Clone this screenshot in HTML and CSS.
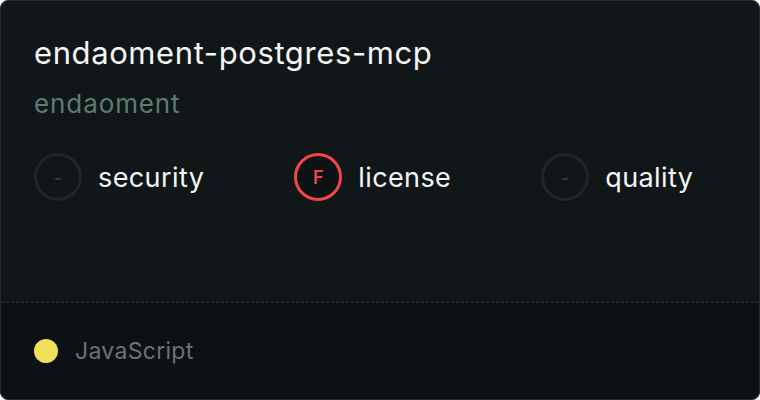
FILE: index.html
```html
<!DOCTYPE html>
<html lang="en">
<head>
    <meta charset="UTF-8">
    <meta name="viewport" content="width=device-width, initial-scale=1.0">
    <title>endaoment-postgres-mcp</title>
    <link rel="stylesheet" href="styles.css">
</head>
<body>
    <div class="card">
        <div class="card-main">
            <h1 class="repo-name">endaoment-postgres-mcp</h1>
            <p class="repo-owner">endaoment</p>

            <div class="scores">
                <div class="score">
                    <span class="grade empty">-</span>
                    <span class="score-label">security</span>
                </div>
                <div class="score">
                    <span class="grade fail">F</span>
                    <span class="score-label">license</span>
                </div>
                <div class="score">
                    <span class="grade empty">-</span>
                    <span class="score-label">quality</span>
                </div>
            </div>
        </div>

        <div class="card-footer">
            <span class="lang-dot"></span>
            <span class="lang-name">JavaScript</span>
        </div>
    </div>
</body>
</html>
```

FILE: styles.css
```css
:root {
    --card-bg: #111719;
    --footer-bg: #0d1113;
    --border-color: #23292c;
    --text-color: #f5f5f5;
    --muted-green: #5e7b72;
    --muted-gray: #6d7275;
    --ring-empty: #1f2528;
    --grade-red: #f04747;
    --js-yellow: #f1e05a;
}

* {
    margin: 0;
    padding: 0;
    box-sizing: border-box;
}

body {
    background-color: #ffffff;
    font-family: 'Inter', 'Noto Sans', sans-serif;
}

.card {
    width: 760px;
    height: 400px;
    background-color: var(--card-bg);
    border: 1px solid var(--border-color);
    border-radius: 8px;
    overflow: hidden;
    display: flex;
    flex-direction: column;
}

.card-main {
    flex: 1;
    padding: 34px 33px 0;
}

.repo-name {
    font-size: 31px;
    font-weight: 400;
    line-height: 36px;
    letter-spacing: 0.6px;
    color: var(--text-color);
}

.repo-owner {
    font-size: 26px;
    line-height: 30px;
    letter-spacing: 0.9px;
    margin-top: 18px;
    color: var(--muted-green);
}

.scores {
    display: flex;
    gap: 90px;
    margin-top: 34px;
}

.score {
    display: flex;
    align-items: center;
    gap: 16px;
}

.grade {
    width: 48px;
    height: 48px;
    border-radius: 50%;
    border: 3px solid var(--ring-empty);
    display: flex;
    justify-content: center;
    align-items: center;
    font-size: 18px;
    font-weight: 600;
}

.grade.empty {
    color: #343a3d;
}

.grade.fail {
    border-color: var(--grade-red);
    color: var(--grade-red);
    background-color: #0d1214;
}

.score-label {
    font-size: 27px;
    letter-spacing: 0.4px;
    color: var(--text-color);
}

.card-footer {
    height: 97px;
    background-color: var(--footer-bg);
    border-top: 1px dashed #2a3134;
    display: flex;
    align-items: center;
    gap: 17px;
    padding: 0 33px;
}

.lang-dot {
    width: 24px;
    height: 24px;
    border-radius: 50%;
    background-color: var(--js-yellow);
}

.lang-name {
    font-size: 23px;
    letter-spacing: 0.3px;
    color: var(--muted-gray);
}
```
